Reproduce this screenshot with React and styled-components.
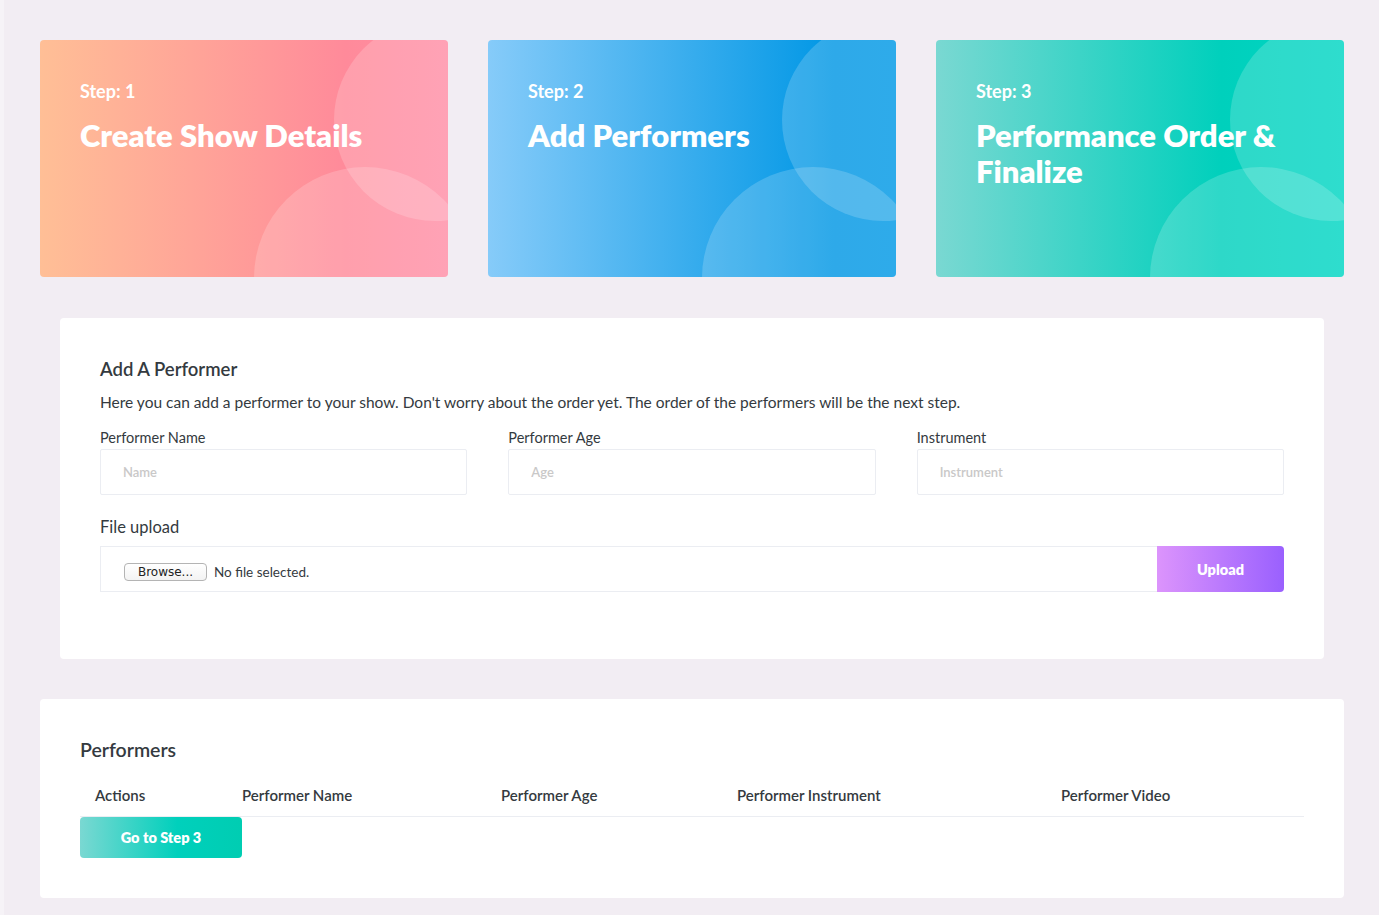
import React from "react";
import styled, { createGlobalStyle } from "styled-components";

const GlobalStyle = createGlobalStyle`
  html, body { margin: 0; padding: 0; }
  body {
    background: #f2edf3;
    font-family: Lato, "Noto Sans", "Liberation Sans", sans-serif;
    color: #343a40;
    -webkit-font-smoothing: antialiased;
  }
  * { box-sizing: border-box; }
`;

const gradients = {
  danger: "linear-gradient(to right, #ffbf96, #ff8a9a 75%, #ff8ea6)",
  info: "linear-gradient(to right, #86cbf9, #0097e5 85%, #0099e6)",
  success: "linear-gradient(to right, #7ad8d2, #00d0bc 70%, #00d6c4)",
  primary: "linear-gradient(to right, #dc94fc, #9a60fe)",
  successBtn: "linear-gradient(to right, #7ad8d2, #00d0bc 60%, #00cdb2)",
};

const Page = styled.div`
  min-height: 915px;
  border-left: 4px solid #f6f3f7;
  padding: 40px 35px 16px 36px;
`;

const StepRow = styled.div`
  display: grid;
  grid-template-columns: repeat(3, 1fr);
  gap: 40px;
`;

const StepCard = styled.div`
  position: relative;
  overflow: hidden;
  height: 237px;
  border-radius: 4px;
  background: ${(p) => gradients[p.$tone]};
  padding: 37px 40px 0 40px;
  color: #fff;
`;

const Circles = styled.svg`
  position: absolute;
  top: 0;
  right: 0;
  width: 100%;
  height: 100%;
  pointer-events: none;
`;

const StepLabel = styled.div`
  position: relative;
  font-size: 18px;
  font-weight: 700;
  line-height: 28px;
`;

const StepTitle = styled.h2`
  position: relative;
  margin: 12px 0 0 0;
  font-size: 31px;
  font-weight: 800;
  line-height: 36px;
`;

const Card = styled.section`
  background: #fff;
  border-radius: 4px;
  padding: 40px;
  margin-top: 40px;
`;

const FormCard = styled(Card)`
  margin: 41px 20px 0;
  padding-bottom: 67px;
`;

const CardTitle = styled.h4`
  margin: 0;
  font-size: ${(p) => (p.$large ? "19.5px" : "18.5px")};
  font-weight: 600;
  line-height: 22px;
  color: #343a40;
`;

const Description = styled.p`
  margin: 11px 0 0;
  font-size: 15.5px;
  line-height: 22px;
  color: #343a40;
`;

const FieldGrid = styled.div`
  display: grid;
  grid-template-columns: repeat(3, 1fr);
  gap: 41px;
  margin-top: 16px;
`;

const Field = styled.div`
  display: flex;
  flex-direction: column;
`;

const Label = styled.label`
  font-size: ${(p) => (p.$big ? "16.5px" : "14.5px")};
  line-height: ${(p) => (p.$big ? "20px" : "18px")};
  color: #343a40;
  margin-bottom: ${(p) => (p.$big ? "9px" : "2px")};
`;

const Input = styled.input`
  height: 46px;
  border: 1px solid #ebedf2;
  border-radius: 2px;
  padding: 0 22px;
  font-family: inherit;
  font-size: 13px;
  font-weight: 600;
  color: #343a40;
  outline: none;
  &::placeholder {
    color: #c9c8c8;
  }
`;

const UploadGroup = styled.div`
  margin-top: 22px;
  display: flex;
  flex-direction: column;
`;

const InputGroup = styled.div`
  display: flex;
  height: 46px;
`;

const FileBox = styled.div`
  flex: 1;
  display: flex;
  align-items: center;
  gap: 7px;
  border: 1px solid #ebedf2;
  border-right: none;
  padding: 5px 23px 0;
  font-size: 13.5px;
  color: #343a40;
`;

const BrowseButton = styled.span`
  display: inline-flex;
  align-items: center;
  justify-content: center;
  width: 83px;
  height: 18px;
  border: 1px solid #b4b4b4;
  border-radius: 4px;
  background: linear-gradient(#ffffff, #f3f3f3);
  font-family: "DejaVu Sans", "Liberation Sans", sans-serif;
  font-size: 12px;
  color: #222;
`;

const GradientButton = styled.button`
  border: none;
  background: ${(p) => gradients[p.$tone]};
  color: #fff;
  font-family: inherit;
  font-size: 14.5px;
  font-weight: 800;
  cursor: pointer;
  width: ${(p) => p.$width};
  height: ${(p) => p.$height};
  border-radius: ${(p) => p.$radius || "4px"};
`;

const TableHead = styled.div`
  display: grid;
  grid-template-columns: 147px 259px 236px 324px 1fr;
  margin-top: 13px;
  border-bottom: 1px solid #ebedf2;
`;

const Th = styled.div`
  padding: 12px 15px;
  font-size: 15px;
  font-weight: 600;
  line-height: 18px;
  color: #343a40;
`;

function Bubbles() {
  return (
    <Circles viewBox="0 0 408 237" preserveAspectRatio="none">
      <circle cx="395" cy="80" r="101" fill="rgba(255,255,255,0.18)" />
      <circle cx="325" cy="238" r="111" fill="rgba(255,255,255,0.18)" />
    </Circles>
  );
}

const steps = [
  { tone: "danger", step: 1, title: "Create Show Details" },
  { tone: "info", step: 2, title: "Add Performers" },
  { tone: "success", step: 3, title: "Performance Order & Finalize" },
];

const headers = [
  "Actions",
  "Performer Name",
  "Performer Age",
  "Performer Instrument",
  "Performer Video",
];

export default function App() {
  return (
    <>
      <GlobalStyle />
      <Page>
        <StepRow>
          {steps.map((s) => (
            <StepCard key={s.step} $tone={s.tone}>
              <Bubbles />
              <StepLabel>Step: {s.step}</StepLabel>
              <StepTitle>{s.title}</StepTitle>
            </StepCard>
          ))}
        </StepRow>

        <FormCard>
          <CardTitle>Add A Performer</CardTitle>
          <Description>
            Here you can add a performer to your show. Don't worry about the
            order yet. The order of the performers will be the next step.
          </Description>
          <FieldGrid>
            <Field>
              <Label>Performer Name</Label>
              <Input placeholder="Name" />
            </Field>
            <Field>
              <Label>Performer Age</Label>
              <Input placeholder="Age" />
            </Field>
            <Field>
              <Label>Instrument</Label>
              <Input placeholder="Instrument" />
            </Field>
          </FieldGrid>
          <UploadGroup>
            <Label $big>File upload</Label>
            <InputGroup>
              <FileBox>
                <BrowseButton>Browse...</BrowseButton>
                <span>No file selected.</span>
              </FileBox>
              <GradientButton
                $tone="primary"
                $width="127px"
                $height="46px"
                $radius="0 4px 4px 0"
              >
                Upload
              </GradientButton>
            </InputGroup>
          </UploadGroup>
        </FormCard>

        <Card>
          <CardTitle $large>Performers</CardTitle>
          <TableHead>
            {headers.map((h) => (
              <Th key={h}>{h}</Th>
            ))}
          </TableHead>
          <GradientButton $tone="successBtn" $width="162px" $height="41px">
            Go to Step 3
          </GradientButton>
        </Card>
      </Page>
    </>
  );
}
